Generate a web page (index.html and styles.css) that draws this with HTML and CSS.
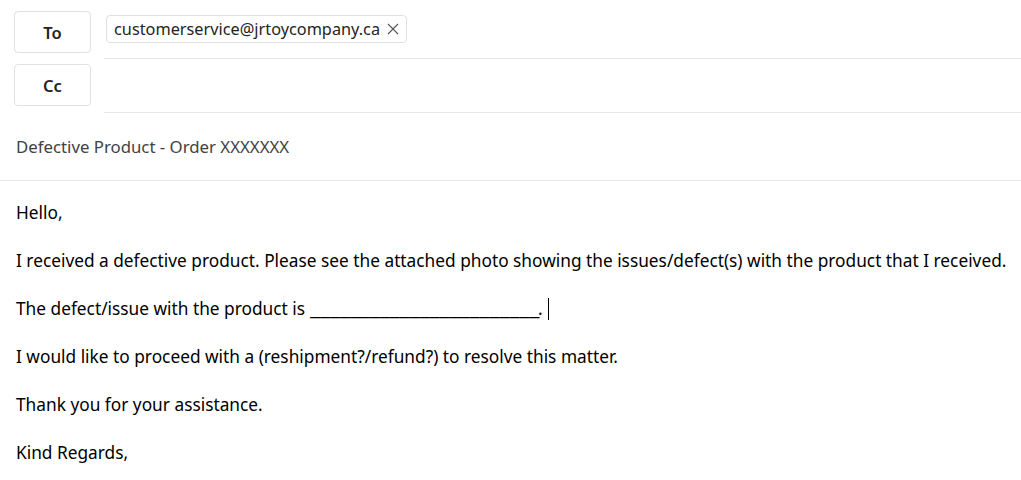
FILE: index.html
```html
<!DOCTYPE html>
<html>
<head>
<meta charset="utf-8">
<link rel="stylesheet" href="styles.css">
</head>
<body>
<div class="compose">
  <div class="row row-to">
    <button class="field-btn">To</button>
    <div class="recips">
      <span class="chip">customerservice@jrtoycompany.ca<span class="chip-x"><svg width="12" height="12" viewBox="0 0 12 12"><path d="M1 1 L11 11 M11 1 L1 11" stroke="#555" stroke-width="1.1" fill="none"/></svg></span></span>
    </div>
  </div>
  <div class="row row-cc">
    <button class="field-btn">Cc</button>
    <div class="recips"></div>
  </div>
  <div class="subject">Defective Product - Order XXXXXXX</div>
  <div class="body">
    <p>Hello,</p>
    <p>I received a defective product. Please see the attached photo showing the issues/defect(s) with the product that I received.</p>
    <p>The defect/issue with the product is <span class="blank">_______________________</span>.<span class="caret"></span></p>
    <p>I would like to proceed with a (reshipment?/refund?) to resolve this matter.</p>
    <p>Thank you for your assistance.</p>
    <p>Kind Regards,</p>
  </div>
</div>
</body>
</html>
```
FILE: styles.css
```css
html, body {
  margin: 0;
  padding: 0;
  background: #fff;
}
body {
  font-family: "Noto Sans", "Open Sans", sans-serif;
  font-size: 17.3px;
  color: #242424;
  overflow: hidden;
}
.compose {
  width: 1021px;
}
.row {
  display: flex;
  align-items: flex-start;
  padding-left: 14px;
}
.row-to {
  height: 59px;
}
.row-cc {
  height: 54px;
}
.field-btn {
  width: 77px;
  height: 42px;
  border: 1px solid #e1e1e1;
  border-radius: 4px;
  background: #fff;
  font-family: inherit;
  font-size: 16.5px;
  font-weight: 600;
  color: #242424;
  padding: 0;
  flex-shrink: 0;
}
.row-to .field-btn {
  margin-top: 11px;
}
.row-cc .field-btn {
  margin-top: 5px;
}
.recips {
  flex: 1;
  align-self: stretch;
  margin-left: 13px;
  border-bottom: 1px solid #e6e6e6;
  display: flex;
  align-items: flex-start;
  padding-left: 2px;
}
.row-to .recips {
  padding-top: 15px;
}
.chip {
  display: inline-flex;
  align-items: center;
  box-sizing: border-box;
  height: 28px;
  padding: 0 7px 0 7px;
  border: 1px solid #e0e0e0;
  border-radius: 4px;
  font-size: 16.3px;
  color: #242424;
}
.chip-x {
  display: inline-flex;
  margin-left: 7px;
}
.subject {
  height: 68px;
  box-sizing: border-box;
  display: flex;
  align-items: center;
  padding: 0 16px 1px;
  border-bottom: 1px solid #e6e6e6;
  color: #424242;
  font-size: 16.8px;
}
.body {
  padding: 20px 0 0 16px;
  color: #000;
}
.body p {
  margin: 0 0 24px;
  line-height: 24px;
  white-space: nowrap;
}
.blank {
  display: inline-block;
  transform: scaleX(1.3);
  transform-origin: left center;
  margin-right: 52px;
}
.caret {
  display: inline-block;
  width: 1px;
  height: 22px;
  background: #000;
  vertical-align: -5px;
  margin-left: 5px;
}
```
